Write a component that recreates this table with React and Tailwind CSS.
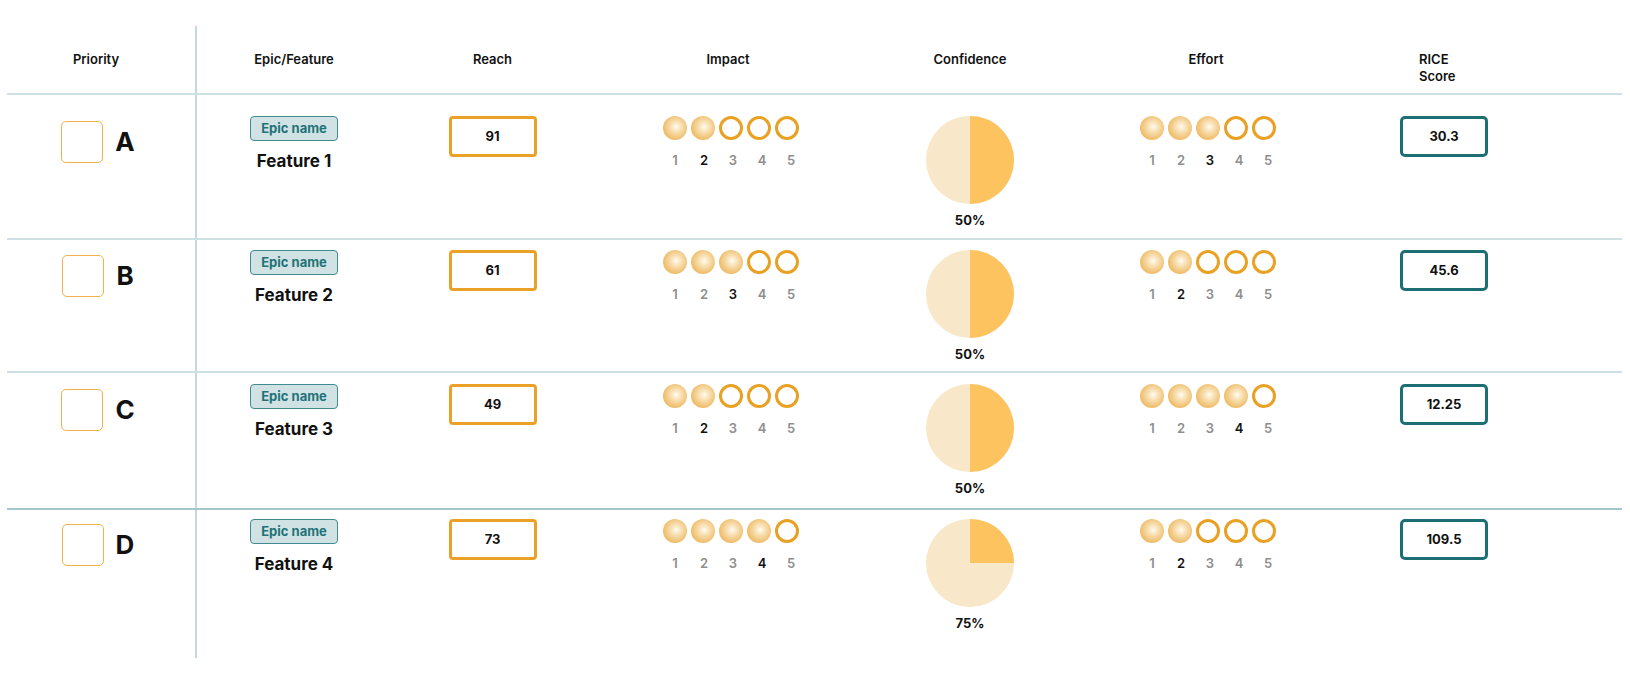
import React from 'react';

const rows = [
  { letter: 'A', feature: 'Feature 1', reach: 91, impact: 2, dark: 0.5, label: '50%', effort: 3, rice: '30.3', rowClass: 'h-[145px] border-b-2 border-[#cde0e3]', pad: 'pt-[21px]' },
  { letter: 'B', feature: 'Feature 2', reach: 61, impact: 3, dark: 0.5, label: '50%', effort: 2, rice: '45.6', rowClass: 'h-[133px] border-b-2 border-[#cde0e3]', pad: 'pt-[10px]' },
  { letter: 'C', feature: 'Feature 3', reach: 49, impact: 2, dark: 0.5, label: '50%', effort: 4, rice: '12.25', rowClass: 'h-[137px] border-b-2 border-[#a2c8cb]', pad: 'pt-[11px]' },
  { letter: 'D', feature: 'Feature 4', reach: 73, impact: 4, dark: 0.25, label: '75%', effort: 2, rice: '109.5', rowClass: 'h-[148px]', pad: 'pt-[9px]' },
];

const gridCols = 'grid grid-cols-[190px_194px_203px_268px_216px_256px_220px_1fr]';

const Dot = ({ filled }) =>
  filled ? (
    <div className="w-6 h-6 rounded-full bg-[radial-gradient(ellipse_at_55%_45%,#fffbf3_0%,#f9e3b9_25%,#f0c275_62%,#e7a844_100%)]" />
  ) : (
    <div className="w-6 h-6 rounded-full border-[3px] border-[#e9a124]" />
  );

const Scale = ({ value }) => (
  <div className="flex flex-col items-start">
    <div className="flex gap-1">
      {[1, 2, 3, 4, 5].map((n) => (
        <Dot key={n} filled={n <= value} />
      ))}
    </div>
    <div className="flex gap-[5px] mt-[12px]">
      {[1, 2, 3, 4, 5].map((n) => (
        <span
          key={n}
          className={
            n === value
              ? 'w-6 text-center text-[13px] leading-4 font-semibold text-[#111]'
              : 'w-6 text-center text-[13px] leading-4 font-semibold text-[#8e8e8e]'
          }
        >
          {n}
        </span>
      ))}
    </div>
  </div>
);

const Pie = ({ dark, label }) => {
  const r = 44;
  const c = 44;
  const angle = dark * 2 * Math.PI;
  const x = c + r * Math.sin(angle);
  const y = c - r * Math.cos(angle);
  const large = dark > 0.5 ? 1 : 0;
  return (
    <div className="flex flex-col items-center">
      <svg width="88" height="88" viewBox="0 0 88 88">
        <circle cx={c} cy={c} r={r} fill="#f8e7c8" />
        <path d={`M${c} ${c} L${c} ${c - r} A${r} ${r} 0 ${large} 1 ${x} ${y} Z`} fill="#fdc35e" />
      </svg>
      <span className="mt-[8px] text-[13px] leading-4 font-bold">{label}</span>
    </div>
  );
};

export default function App() {
  return (
    <div className="min-h-screen bg-white pt-[26px] font-['Inter',sans-serif] text-[#111]">
      <div className="ml-[7px] w-[1615px]">
        {/* Header */}
        <div className={`${gridCols} h-[69px] border-b-2 border-[#cde0e3] text-[13px] leading-4 font-semibold`}>
          <div className="border-r-2 border-[#c3dadd] pr-[10px] pt-[25px] text-center">Priority</div>
          <div className="pt-[25px] text-center">Epic/Feature</div>
          <div className="pt-[25px] text-center">Reach</div>
          <div className="pt-[25px] text-center">Impact</div>
          <div className="pt-[25px] text-center">Confidence</div>
          <div className="pt-[25px] text-center">Effort</div>
          <div className="pt-[25px] flex justify-center">
            <div className="w-[50px] text-left leading-[16.5px]">
              RICE
              <br />
              Score
            </div>
          </div>
          <div />
        </div>

        {rows.map((row) => (
          <div key={row.letter} className={`${gridCols} ${row.rowClass}`}>
            <div className={`${row.pad} border-r-2 border-[#c3dadd] pr-[6px] flex justify-center items-start`}>
              <div className="flex items-center gap-3 mt-[5px]">
                <div className="w-[42px] h-[42px] rounded-[5px] border border-[#f0b24a]" />
                <span className="text-[26px] leading-none font-bold">{row.letter}</span>
              </div>
            </div>
            <div className={`${row.pad} flex flex-col items-center`}>
              <span className="h-[25px] px-[10px] flex items-center rounded-[4px] border border-[#3f8b8f] bg-[#d0e2e4] text-[13px] font-bold text-[#1f7378]">
                Epic name
              </span>
              <span className="mt-[9px] text-[17px] leading-[22px] font-bold">{row.feature}</span>
            </div>
            <div className={`${row.pad} flex justify-center items-start`}>
              <div className="w-[88px] h-[41px] rounded-[4px] border-[3px] border-[#eaa128] flex items-center justify-center text-[13px] font-bold">
                {row.reach}
              </div>
            </div>
            <div className={`${row.pad} flex justify-center items-start pl-[10px]`}>
              <Scale value={row.impact} />
            </div>
            <div className={`${row.pad} flex justify-center items-start`}>
              <Pie dark={row.dark} label={row.label} />
            </div>
            <div className={`${row.pad} flex justify-center items-start pl-[8px]`}>
              <Scale value={row.effort} />
            </div>
            <div className={`${row.pad} flex justify-center items-start`}>
              <div className="w-[88px] h-[41px] rounded-[5px] border-[3px] border-[#1e6f74] flex items-center justify-center text-[13px] font-bold">
                {row.rice}
              </div>
            </div>
            <div />
          </div>
        ))}
      </div>
    </div>
  );
}
